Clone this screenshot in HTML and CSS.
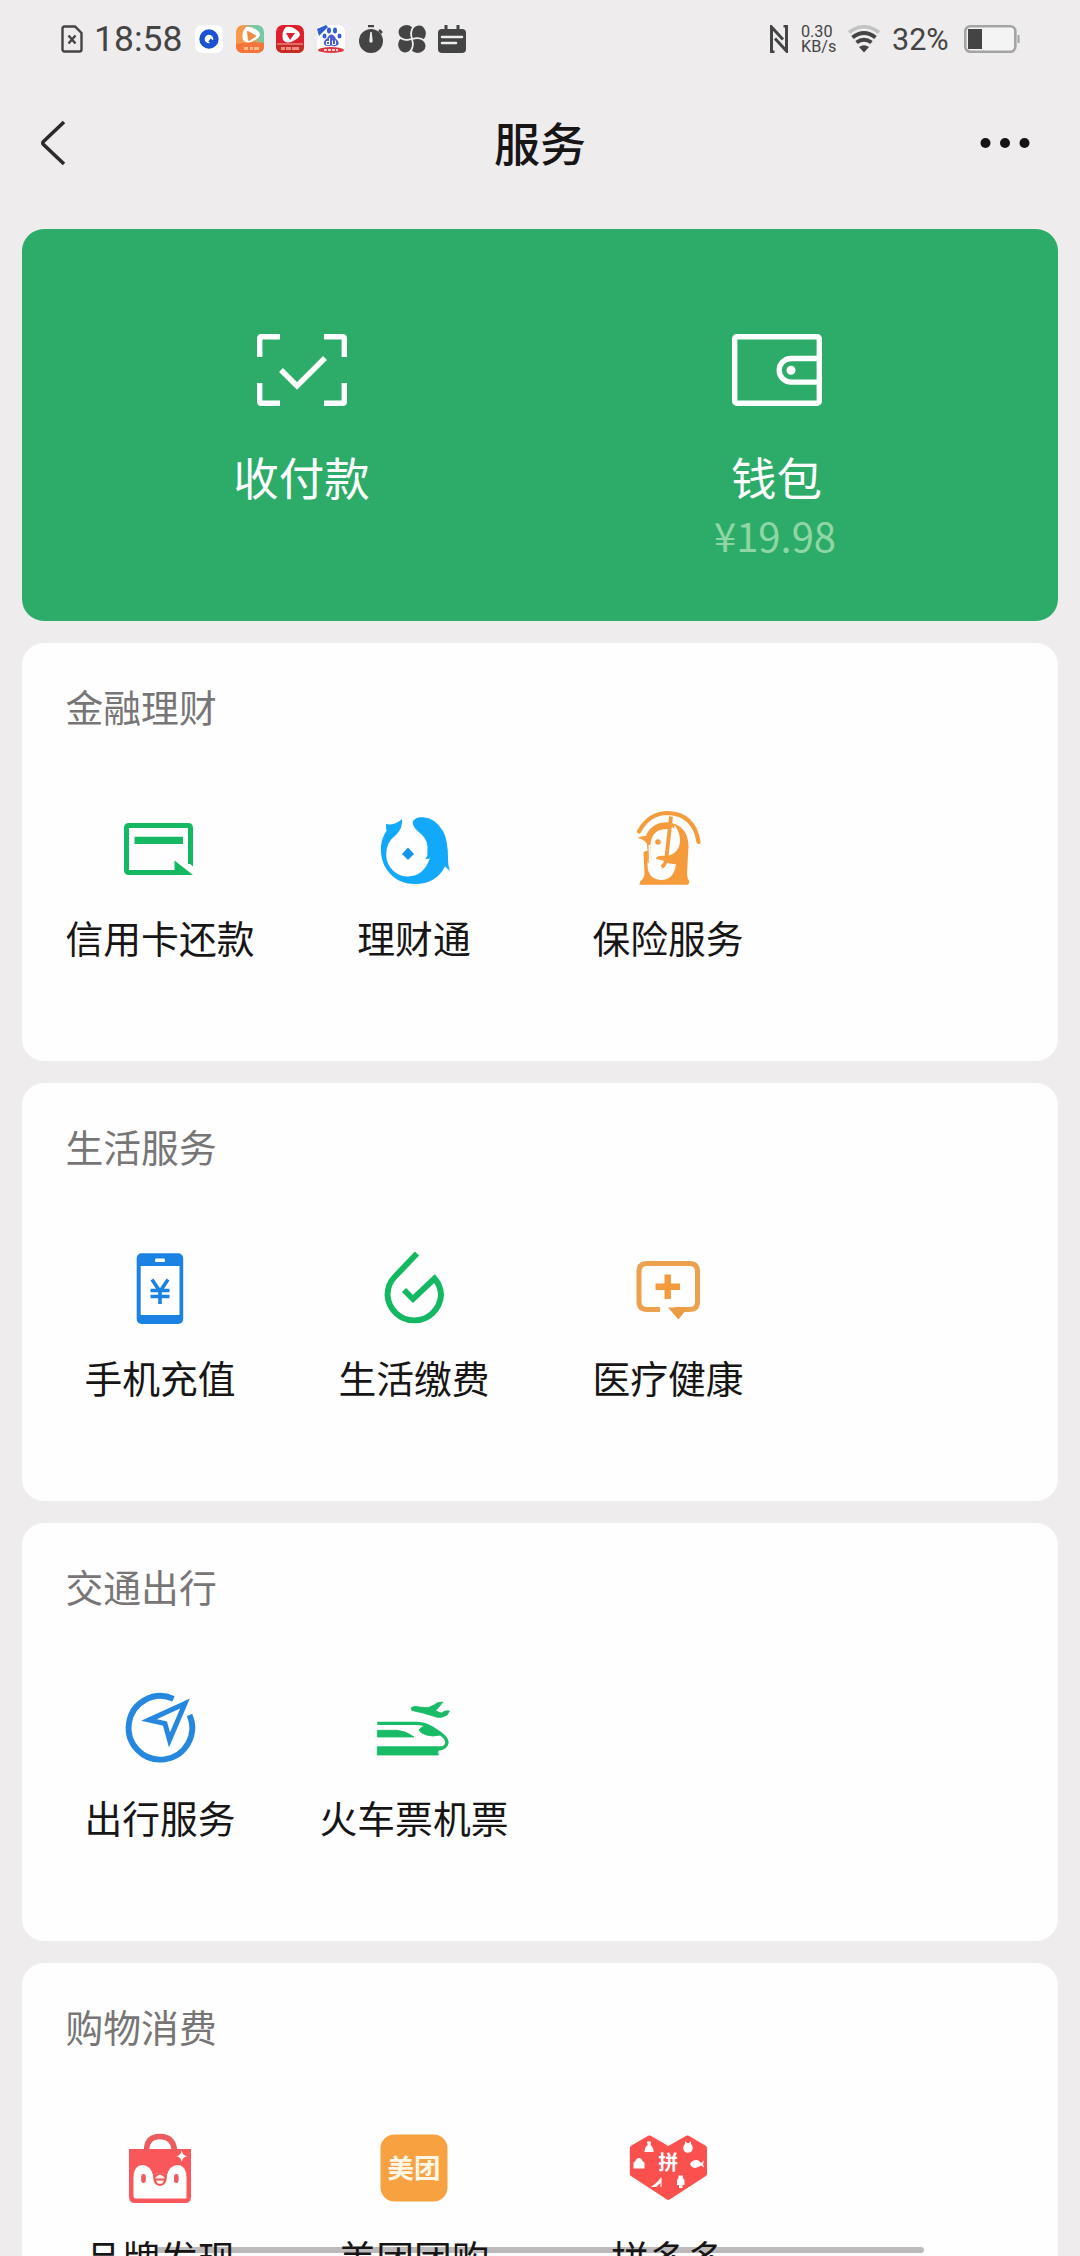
FILE: index.html
```html
<!DOCTYPE html>
<html lang="zh-CN">
<head>
<meta charset="utf-8">
<title>服务</title>
<link rel="stylesheet" href="styles.css">
</head>
<body>
<div class="screen">
  <div class="status">
    <div class="status-left">
      <svg class="sim" width="22" height="28" viewBox="0 0 22 28"><path d="M3.500 1.500H14L20.500 8V24.500Q20.500 26.500 18.500 26.500H3.500Q1.500 26.500 1.500 24.500V3.500Q1.500 1.500 3.500 1.500Z" fill="none" stroke="#444" stroke-width="2.400"/><path d="M7.500 10.500l7 8M14.500 10.500l-7 8" stroke="#444" stroke-width="2.400"/></svg>
      <span class="time">18:58</span>
      <div class="notes">
        <svg width="28" height="28" viewBox="0 0 28 28"><rect width="28" height="28" rx="7" fill="#fff"/><circle cx="14" cy="14" r="7" fill="none" stroke="#1b51d3" stroke-width="5.400"/><path d="M14.500 15l5 4" stroke="#1b51d3" stroke-width="4"/></svg>
        <svg width="28" height="28" viewBox="0 0 28 28"><defs><linearGradient id="og" x1="0" y1=".6" x2="1" y2="0"><stop offset=".45" stop-color="#f59a4d"/><stop offset=".7" stop-color="#77c9a4"/></linearGradient></defs><rect width="28" height="28" rx="7" fill="url(#og)"/><path d="M0 19Q14 16 28 18V21Q28 28 21 28H7Q0 28 0 21Z" fill="#f4743b"/><path d="M10 2Q5 7 7 15Q11 20 19 15Q26 11 23 7Q17 1 10 2Z" fill="#fff"/><path d="M12 7l7 4-6 4Z" fill="#ef8a3f" stroke="#ef8a3f" stroke-width="2" stroke-linejoin="round"/><path d="M8 23.500h4m2 0h3m1 0h5" stroke="#ffb98a" stroke-width="3"/></svg>
        <svg width="28" height="28" viewBox="0 0 28 28"><rect width="28" height="28" rx="7" fill="#df1f2d"/><path d="M0 19h28v3Q28 28 21 28H7Q0 28 0 21Z" fill="#c72b25"/><path d="M10 2Q5 7 7 15Q11 20 19 15Q26 11 23 7Q17 1 10 2Z" fill="#fff"/><path d="M10 8h9l-5 7Z" fill="#df1f2d"/><path d="M1 19h26" stroke="#f4b3a0"/><path d="M5 23.500h4m1 0h5m1 0h7" stroke="#ee8f80" stroke-width="3"/></svg>
        <svg width="28" height="28" viewBox="0 0 28 28"><rect width="28" height="28" rx="7" fill="#fff"/><g fill="#2f5fd4"><path d="M0 4L9 0l2 2L2 11Z"/><ellipse cx="12" cy="5.500" rx="2" ry="3"/><ellipse cx="18" cy="5.500" rx="2" ry="3"/><ellipse cx="7.500" cy="11" rx="2" ry="2.600"/><ellipse cx="22.500" cy="11" rx="2" ry="2.600"/></g><path d="M14.500 9.500Q17 9.500 19 14Q23 17 21 20Q18 22 14 20.500Q8 22 7 19Q6 16 10 13.500Q12 9.500 14.500 9.500Z" fill="#4b5fd0"/><path d="M9.500 16.500h3v3h-3zM12.500 13v7M15.500 15.500v4h3v-4" fill="none" stroke="#fff" stroke-width="1"/><ellipse cx="14" cy="25" rx="13" ry="3" fill="#dd3942"/><path d="M7 25h14" stroke="#fff" stroke-width="1.500" stroke-dasharray="3 1"/></svg>
        <svg class="timer" width="28" height="28" viewBox="0 0 28 28"><circle cx="14" cy="16" r="12" fill="#444"/><path d="M11 1h6M22 5l3 3" stroke="#444" stroke-width="2.500"/><path d="M13.300 7h1.400l1 9a1.700 1.700 0 1 1-3.400 0Z" fill="#eee"/></svg>
        <svg width="28" height="28" viewBox="0 0 28 28"><g fill="#444"><path id="petal" d="M13.300 13.300Q5 15.500 1.500 10.500Q-1 5 3 2Q9-2 14.500 2.500Q11.500 7.500 13.300 13.300Z"/><use href="#petal" transform="rotate(90 14 14)"/><use href="#petal" transform="rotate(180 14 14)"/><use href="#petal" transform="rotate(270 14 14)"/></g><g fill="none" stroke="#eee" stroke-width="1.300"><path id="seam" d="M14 14Q11.500 8 14.800 2"/><use href="#seam" transform="rotate(90 14 14)"/><use href="#seam" transform="rotate(180 14 14)"/><use href="#seam" transform="rotate(270 14 14)"/></g></svg>
        <svg width="28" height="28" viewBox="0 0 28 28"><rect x="0" y="4" width="28" height="24" rx="4" fill="#444"/><path d="M8 0v6M20 0v6" stroke="#444" stroke-width="3"/><path d="M4 12h20M4 18h14" stroke="#eee" stroke-width="2.500" stroke-linecap="round"/></svg>
      </div>
    </div>
    <div class="status-right">
      <svg class="nfc" width="18" height="28" viewBox="0 0 18 28"><path d="M4.500 27H1.500V2L13 14.500M13.500 1h3v25L5 13.500" fill="none" stroke="#444" stroke-width="3"/></svg>
      <div class="rate"><span>0.30</span><span>KB/s</span></div>
      <svg class="wifi" width="34" height="28" viewBox="0 0 34 28"><path d="M2 7.500Q17-4 32 7.500" fill="none" stroke="#c2c2c2" stroke-width="3.500"/><path d="M5.500 12.500Q17 3.500 28.500 12.500M9.500 17.500Q17 12 24.500 17.500" fill="none" stroke="#444" stroke-width="4"/><path d="M12 22Q17 18.500 22 22L17 27.500Z" fill="#444"/></svg>
      <span class="pct">32%</span>
      <svg class="battery" width="56" height="28" viewBox="0 0 56 28"><rect x="1.300" y="1.300" width="50" height="25.400" rx="5" fill="#f4f4f4" stroke="#a4a4a4" stroke-width="2.600"/><rect x="4" y="4" width="14" height="20" fill="#444"/><path d="M54.500 10v8" stroke="#a4a4a4" stroke-width="2"/></svg>
    </div>
  </div>

  <header class="nav">
    <svg width="26" height="46" viewBox="0 0 26 46"><path d="M24 2L3.500 21.500Q2 23 3.500 24.500L24 44" fill="none" stroke="#2c2a2b" stroke-width="3.600"/></svg>
    <h1>服务</h1>
    <svg width="50" height="12" viewBox="0 0 50 12"><g fill="#151314"><circle cx="5.500" cy="6" r="5"/><circle cx="25" cy="6" r="5"/><circle cx="44.500" cy="6" r="5"/></g></svg>
  </header>

  <main class="stack">
    <section class="pay">
      <div class="pay-item">
        <svg width="92" height="74" viewBox="0 0 92 74"><g fill="none" stroke="#fff" stroke-width="5.400"><path d="M24 3.700H5.500Q3.700 3.700 3.700 5.500V24M68 3.700H86.500Q88.300 3.700 88.300 5.500V24M24 70.300H5.500Q3.700 70.300 3.700 68.500V50M68 70.300H86.500Q88.300 70.300 88.300 68.500V50"/><path d="M25 37L41 53L69 25"/></g></svg>
        <span class="pay-name">收付款</span>
      </div>
      <div class="pay-item">
        <svg width="92" height="74" viewBox="0 0 92 74"><g fill="none" stroke="#fff" stroke-width="5.400"><rect x="3.700" y="3.700" width="84.600" height="66.600" rx="2"/><path d="M88 25.500H60a11.800 11.800 0 0 0 0 23.600H88"/></g><circle cx="60" cy="37.300" r="4.500" fill="#fff"/></svg>
        <span class="pay-name">钱包</span>
        <span class="balance">¥19.98</span>
      </div>
    </section>

    <section class="card">
      <h2>金融理财</h2>
      <div class="grid">
        <div class="item">
          <svg viewBox="0 0 90 90"><path d="M75.500 60V24Q75.500 21.500 73 21.500H14Q11.500 21.500 11.500 24V66Q11.500 68.500 14 68.500H62" fill="none" stroke="#14b862" stroke-width="5"/><path d="M19.500 32.700H68V40H19.500ZM59.500 56.500L78 71H59.500ZM73 58h5v4.500Z" fill="#14b862"/></svg>
          <span>信用卡还款</span>
        </div>
        <div class="item">
          <svg viewBox="0 0 90 90"><path d="M17 20Q26 22 33 15Q34 24 27 31Q17 38 17.200 51A21.700 21.700 0 0 0 39 72.500Q55 72 61 54Q59 56 56 54.300Q59 53 58.300 49Q60 36 51.500 29.500Q42 22 44 17Q47 12.500 54 13.300Q66 14 74 27Q79 36 79 54Q79 62 81 67L76 62.500Q67 80 46 80Q28 80 18 66Q11 56 12 42Q13 33 17.500 27Q17 24 17 20Z" fill="#13a9fb"/><path d="M39 43.500L45 50L39 56L33 50Z" fill="#1594ec"/></svg>
          <span>理财通</span>
        </div>
        <div class="item">
          <svg viewBox="0 0 90 90"><path d="M16 27.500Q26 9 45 9Q71 10 75.500 38" fill="none" stroke="#f69b3b" stroke-width="4.200" stroke-linecap="round"/><path d="M23.500 30Q31 17 46 18.500L52 20Q65 25 65.500 42L64 70Q64 74 66.500 78L65 80.700H16.500L17 77.500Q21 75 21.500 70L20.500 48L24.500 46.500L25 55Q22 75 38 76Q51 76 53 60Q45 60.500 42 57L33 55Q33 51 44 52Q57 49 57 36Q56 27 49 23L46 25Q29 24 27.500 40Q26.500 52 30 56Q27 56 25.500 60L24 40Q21 35 14.500 34Q19 31.500 23.500 32Z" fill="#f69b3b"/><path d="M48 12.500L43.500 53Q43 61 38.500 63" fill="none" stroke="#f69b3b" stroke-width="3.800"/><path d="M51.500 21Q58 29 56.500 39Q53 47 47.500 49Z" fill="#fefefe"/><path d="M25.500 41L27.500 41Q26.500 52 30 56L26 58Z" fill="#fefefe"/><circle cx="35" cy="38" r="2.800" fill="#f69b3b"/></svg>
          <span>保险服务</span>
        </div>
      </div>
    </section>

    <section class="card">
      <h2>生活服务</h2>
      <div class="grid">
        <div class="item">
          <svg viewBox="0 0 90 90"><rect x="21.700" y="9.300" width="46.500" height="70.700" rx="5" fill="#1a82e2"/><rect x="25.700" y="22" width="38.800" height="49" fill="#fefefe"/><rect x="40" y="14.500" width="10" height="3.400" rx="1" fill="#fff"/><path d="M37 35.500L45 47.500L53 35.500M45 47V60M35.500 46.500H54.500M35.500 52.500H54.500" fill="none" stroke="#1a82e2" stroke-width="3.600"/></svg>
          <span>手机充值</span>
        </div>
        <div class="item">
          <svg viewBox="0 0 90 90"><path d="M48 9.500L26.500 32Q18.500 40 18.500 51A26.800 27 0 0 0 72 51Q72 42 65.500 34.500L44 55L35 46" fill="none" stroke="#14b862" stroke-width="5.900" stroke-linejoin="miter"/></svg>
          <span>生活缴费</span>
        </div>
        <div class="item">
          <svg viewBox="0 0 90 90"><path d="M37 65.500H24Q16 65.500 16 57.500V27.500Q16 19.500 24 19.500H66.500Q74.500 19.500 74.500 27.500V57.500Q74.500 65.500 66.500 65.500H52" fill="none" stroke="#eba14d" stroke-width="5"/><path d="M45 63.500H65L55.500 75.500Z" fill="#eb9c43"/><path d="M44.700 30.500V55M32.500 42.700H57" stroke="#f69b3b" stroke-width="6.400"/></svg>
          <span>医疗健康</span>
        </div>
      </div>
    </section>

    <section class="card">
      <h2>交通出行</h2>
      <div class="grid">
        <div class="item">
          <svg viewBox="0 0 90 90"><path d="M58.500 14.800A31.800 31.800 0 1 0 74.500 31" fill="none" stroke="#2687df" stroke-width="5.800"/><path d="M70 19.500L34 36L50 39.500L54.500 56Z" fill="none" stroke="#2687df" stroke-width="5"/></svg>
          <span>出行服务</span>
        </div>
        <div class="item">
          <svg viewBox="0 0 90 90"><g fill="#18bb66" stroke="#18bb66" stroke-width=".8"><path d="M42 24Q45 21 50 23L59 23.700Q66 21 69 18.500L74 18L66.500 27L72.500 29Q76 26 80.500 27L78 31Q73 34 69 33.500L54 29L43 26.500Z"/><path d="M8.300 46.300H28Q37 47 45 53H8.300ZM50 46Q52 42 58 42Q66 44 71.500 51Q63 53 57.500 51Q51 49 50 46ZM8.300 62.700H73Q67 67 69.500 71H8.300Z"/></g><path d="M8.300 39.400H48Q57 39.500 66 46Q78 53 78 58.500Q77 64 70 65" fill="none" stroke="#18bb66" stroke-width="3.400"/></svg>
          <span>火车票机票</span>
        </div>
      </div>
    </section>

    <section class="card">
      <h2>购物消费</h2>
      <div class="grid">
        <div class="item">
          <svg viewBox="0 0 90 90"><path d="M31.500 26Q32 12.500 45 12.500T59.500 26" fill="none" stroke="#ec5b60" stroke-width="5.500"/><path d="M14 25H76V73Q76 79 70 79H20Q14 79 14 73Z" fill="#f9575a"/><path d="M18.500 53Q19 41 28 41Q36 42 38 51Q45 47 52 51Q54 42 62 41Q71 41 71.500 53V74.500H21Q18.500 74.500 18.500 72Z" fill="#fff"/><rect x="26.200" y="50" width="4.600" height="9" rx="2.300" fill="#ec5b60"/><rect x="59" y="50" width="4.600" height="9" rx="2.300" fill="#ec5b60"/><path d="M38 51Q45 47 52 51Q52 62 45 62Q38 62 38 51Z" fill="#f05559"/><path d="M40 54.500Q45 47 50 54.500ZM41 56.500H49Q48 60 45 60T41 56.500Z" fill="#fff0e8"/><path d="M66.700 26.500Q67.500 31.500 72.500 32.300Q67.500 33 66.700 38Q66 33 61 32.300Q66 31.500 66.700 26.500Z" fill="#fff"/></svg>
          <span>品牌发现</span>
        </div>
        <div class="item">
          <svg viewBox="0 0 90 90"><rect x="11.500" y="10.500" width="67" height="67" rx="14" fill="#f8a140"/><text class="mt" x="45" y="54" text-anchor="middle">美团</text></svg>
          <span>美团团购</span>
        </div>
        <div class="item">
          <svg viewBox="0 0 90 90"><path d="M26.500 14L45.300 25L64.500 14L81.500 24V50L45.300 73.500L9.300 50V24Z" fill="#fa504e" stroke="#fa504e" stroke-width="5" stroke-linejoin="round"/><text class="pin" x="45.300" y="46.300" text-anchor="middle">拼</text><g fill="#fff"><path d="M24 17.500H28L27.500 21Q31 24 30.500 28H21.500Q21.500 23 24.700 21Z"/><circle cx="65" cy="24" r="4.800"/><path d="M62 17l3 3 3-3v4h-6ZM10.500 44.500V38.500Q13 37 13.500 35Q16 33 18.500 35Q19 37 21.500 38.500V44.500ZM67 40Q69 35.500 75 36L78 39L81 36.500L80 40L81 43.500L78 41.500Q70 47 67 40ZM38.500 53V63H37.500V59L33 63H27.500Q32 61 38.500 53ZM55.500 51.500H60V54L61.500 56V61H59.500V64H56V61H54V56L55.500 54Z"/></g></svg>
          <span>拼多多</span>
        </div>
      </div>
    </section>
  </main>
  <div class="home-bar"></div>
</div>
</body>
</html>
```

FILE: styles.css
```css
* {
  box-sizing: border-box;
}

body {
  margin: 0;
  background: #eeeced;
  color: #171516;
  font-family: "Noto Sans CJK SC", sans-serif;
}

svg {
  display: block;
  flex: none;
}

h1,
h2 {
  margin: 0;
  font-weight: 400;
}

.screen {
  position: relative;
  width: 1080px;
  height: 2256px;
  overflow: hidden;
}

.status {
  display: flex;
  justify-content: space-between;
  height: 77px;
  padding: 0 60px 0 61px;
  font-family: Roboto, sans-serif;
  color: #444;
}

.status-left,
.status-right,
.notes {
  display: flex;
  align-items: center;
}

.time {
  width: 100px;
  margin-left: 11px;
  font-size: 35.5px;
  line-height: 40px;
}

.notes {
  gap: 12.5px;
  margin-left: 1px;
}

.rate {
  display: flex;
  flex-direction: column;
  width: 34px;
  margin: 1px 12px 0 13px;
  font-size: 16.2px;
  line-height: 15px;
}

.pct {
  width: 60px;
  margin: 3px 12px 0 11px;
  font-size: 30.5px;
  line-height: 34px;
}

.nav {
  display: flex;
  align-items: center;
  justify-content: space-between;
  height: 131px;
  padding: 0 50px 0 40px;
}

.nav h1 {
  margin-left: 34px;
  padding-bottom: 3px;
  font-size: 46px;
  font-weight: 500;
  line-height: 60px;
}

.stack {
  display: flex;
  flex-direction: column;
  gap: 22px;
  padding: 21px 22px 0;
}

.pay {
  display: grid;
  grid-template-columns: 1fr 1fr;
  height: 392px;
  padding: 104px 44px 0 42px;
  border-radius: 22px;
  background: #2dac69;
  color: #fff;
}

.pay-item {
  display: flex;
  flex-direction: column;
  align-items: center;
}

.pay-name {
  margin-top: 39px;
  font-size: 45.5px;
  line-height: 60px;
}

.balance {
  margin-top: 5px;
  margin-right: 3px;
  color: #8fd6a5;
  font-size: 40px;
  line-height: 48px;
}

.card {
  height: 418px;
  padding-top: 38px;
  border-radius: 22px;
  background: #fefefe;
}

.card h2 {
  margin-left: 43.5px;
  color: #777576;
  font-size: 37.8px;
  line-height: 50px;
}

.grid {
  display: grid;
  grid-template-columns: repeat(3, 254px);
  margin: 73px 0 0 11px;
}

.item {
  display: flex;
  flex-direction: column;
  align-items: center;
}

.item svg {
  width: 90px;
  height: 90px;
}

.item span {
  position: relative;
  z-index: 2;
  margin-top: 18px;
  font-size: 37.8px;
  line-height: 50px;
  white-space: nowrap;
}

.mt {
  fill: #fff6e5;
  font-size: 26.5px;
  font-weight: 700;
}

.pin {
  fill: #fff;
  font-size: 20px;
  font-weight: 700;
}

.home-bar {
  position: absolute;
  z-index: 1;
  bottom: 3px;
  left: 156px;
  width: 768px;
  height: 6px;
  border-radius: 3px;
  background: #bdbabc;
}
```
